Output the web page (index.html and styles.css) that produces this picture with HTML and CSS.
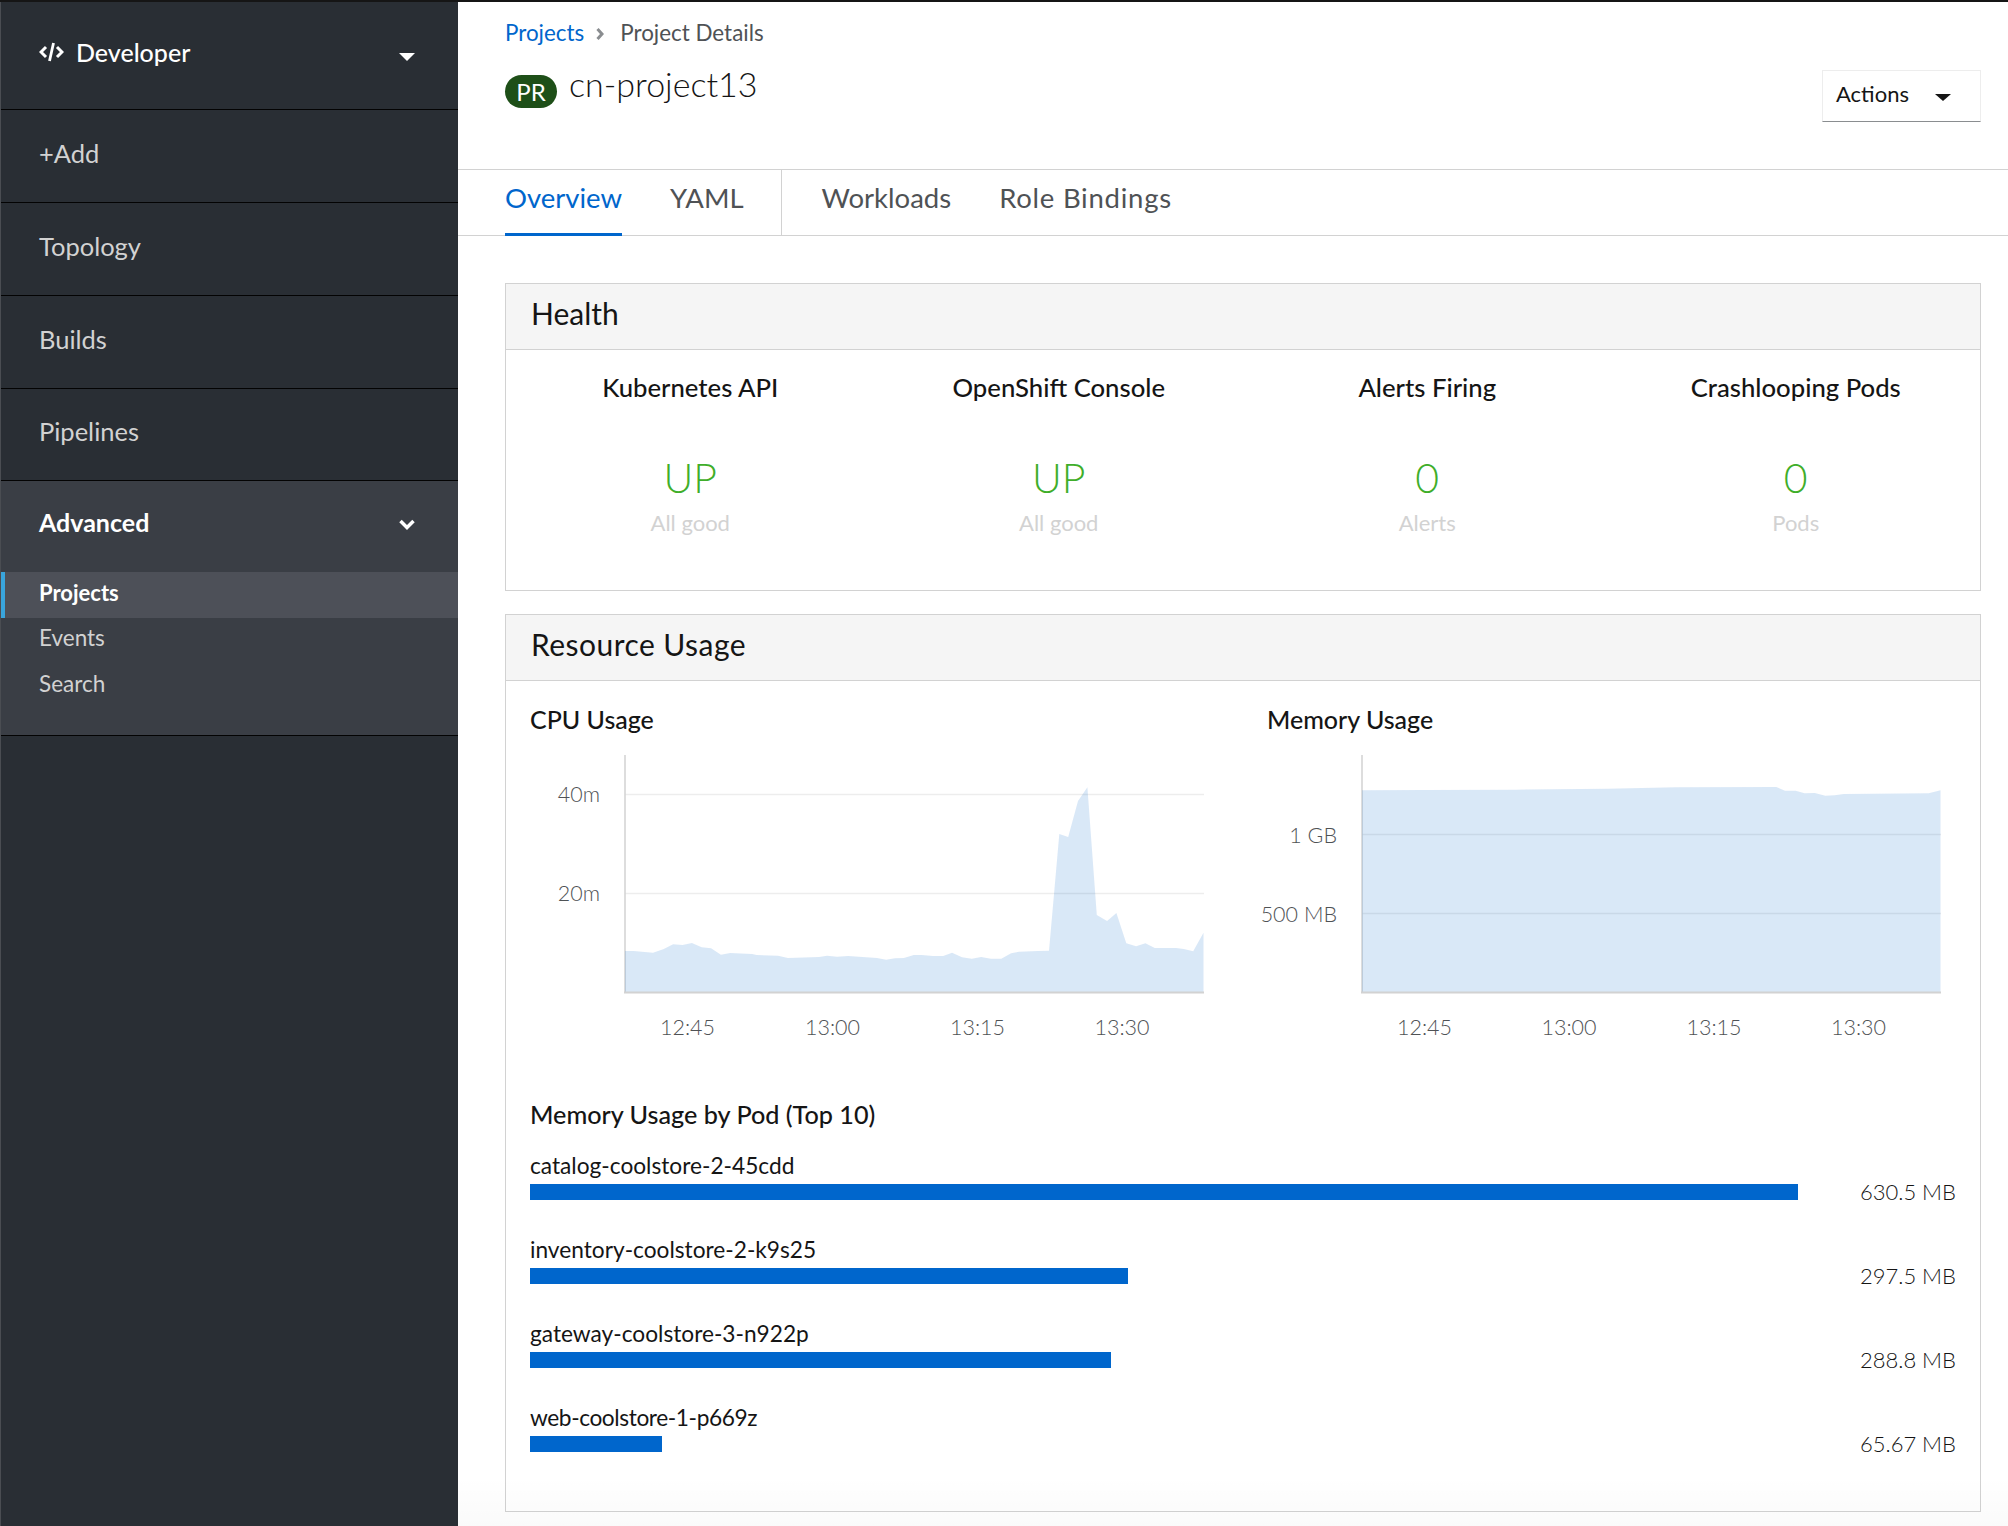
FILE: index.html
```html
<!DOCTYPE html>
<html lang="en">
<head>
    <meta charset="UTF-8">
    <title>Project Details</title>
    <link rel="stylesheet" href="styles.css">
</head>
<body>
    <div class="app">
        <!-- Sidebar -->
        <nav class="sidebar">
            <div class="perspective">
                <svg class="code-icon" viewBox="0 0 25 20" width="25" height="20">
                    <path d="M7 5 L2 10 L7 15 M18 5 L23 10 L18 15" fill="none" stroke="#fff" stroke-width="3"/>
                    <path d="M14.500 1 L10.500 19" fill="none" stroke="#fff" stroke-width="2.800"/>
                </svg>
                <span class="perspective-name">Developer</span>
                <span class="caret caret-white"></span>
            </div>
            <a class="nav-item" href="#">+Add</a>
            <a class="nav-item" href="#">Topology</a>
            <a class="nav-item" href="#">Builds</a>
            <a class="nav-item" href="#">Pipelines</a>
            <div class="nav-section">
                <div class="nav-section-title">
                    <span>Advanced</span>
                    <svg viewBox="0 0 16 12" width="16" height="12">
                        <path d="M1.500 2 L8 8.500 L14.500 2" fill="none" stroke="#fff" stroke-width="3.500"/>
                    </svg>
                </div>
                <a class="sub-item sub-item-active" href="#">Projects</a>
                <a class="sub-item" href="#">Events</a>
                <a class="sub-item" href="#">Search</a>
            </div>
        </nav>

        <!-- Main -->
        <main class="main">
            <div class="page-head">
                <div class="head-left">
                    <div class="breadcrumb">
                        <a href="#">Projects</a>
                        <svg viewBox="0 0 8 12" width="8" height="12">
                            <path d="M1.500 1 L6 6 L1.500 11" fill="none" stroke="#8a8d90" stroke-width="3"/>
                        </svg>
                        <span>Project Details</span>
                    </div>
                    <div class="title-row">
                        <span class="badge">PR</span>
                        <h1>cn-project13</h1>
                    </div>
                </div>
                <button class="actions">Actions <span class="caret caret-dark"></span></button>
            </div>

            <div class="tabs">
                <a class="tab tab-active" href="#">Overview</a>
                <a class="tab tab-last" href="#">YAML</a>
                <span class="tab-sep"></span>
                <a class="tab" href="#">Workloads</a>
                <a class="tab tab-wide" href="#">Role Bindings</a>
            </div>

            <div class="content">
                <!-- Health -->
                <section class="card card-health">
                    <h2 class="card-head">Health</h2>
                    <div class="health-grid">
                        <div class="health-item">
                            <h3>Kubernetes API</h3>
                            <div class="health-value">UP</div>
                            <div class="health-sub">All good</div>
                        </div>
                        <div class="health-item">
                            <h3>OpenShift Console</h3>
                            <div class="health-value">UP</div>
                            <div class="health-sub">All good</div>
                        </div>
                        <div class="health-item">
                            <h3>Alerts Firing</h3>
                            <div class="health-value">0</div>
                            <div class="health-sub">Alerts</div>
                        </div>
                        <div class="health-item">
                            <h3>Crashlooping Pods</h3>
                            <div class="health-value">0</div>
                            <div class="health-sub">Pods</div>
                        </div>
                    </div>
                </section>

                <!-- Resource Usage -->
                <section class="card card-usage">
                    <h2 class="card-head card-head-wide">Resource Usage</h2>
                    <div class="usage-body">
                        <div class="chart-grid">
                            <div class="chart">
                                <h3>CPU Usage</h3>
                                <svg class="chart-svg" viewBox="0 0 700 310" width="700" height="310">
                                    <path class="grid-line" d="M95 54.500 H674 M95 153.500 H674"/>
                                    <path class="axis-line" d="M95 15 V252"/>
                                    <polygon class="area" points="95,211 103.800,211 123,212.700 133.800,209 143.100,204.300 152.500,205 161.900,203 171.700,207.300 181.100,208.300 190.900,214.700 200.300,213 222.100,214 226.600,215 248,215.700 257.900,218 289.100,217 297.100,215.700 307,216.700 318.100,216 347.100,218 356.100,219.700 365,218.300 373.900,218 383.800,215 391.800,215 403,216 413.200,216 422.100,212.700 432,217.300 441.800,218.700 451.200,217 461,218.700 471.300,218.700 481.100,213.300 489.100,211.700 507.900,211 519,210.700 529.300,94 538.200,97 548,61 557.400,47.300 566.800,175 577.100,181 586.400,173 596.300,203.300 606.100,206.300 615.400,203.300 624.800,208 646.300,208 653.800,209 663.200,211.300 673.500,192.700 673.500,252 95,252"/>
                                    <path class="base-line" d="M94 252.500 H674"/>
                                    <text class="tick" x="70" y="62" text-anchor="end">40m</text>
                                    <text class="tick" x="70" y="161" text-anchor="end">20m</text>
                                    <text class="tick" x="157.500" y="295" text-anchor="middle">12:45</text>
                                    <text class="tick" x="302.500" y="295" text-anchor="middle">13:00</text>
                                    <text class="tick" x="447.500" y="295" text-anchor="middle">13:15</text>
                                    <text class="tick" x="592" y="295" text-anchor="middle">13:30</text>
                                </svg>
                            </div>
                            <div class="chart">
                                <h3>Memory Usage</h3>
                                <svg class="chart-svg" viewBox="0 0 700 310" width="700" height="310">
                                    <path class="grid-line" d="M95 94.500 H674 M95 173.500 H674"/>
                                    <path class="axis-line" d="M95 15 V252"/>
                                    <polygon class="area" points="95,50.300 156.700,50 248.500,49.700 340.300,48.700 409.200,47.300 509.300,47 518,50.700 528.600,50.700 537.700,53.300 547.800,53 558.400,55.700 567.600,55.300 576.800,54 661.700,53.300 673.500,50.300 673.500,252 95,252"/>
                                    <path class="base-line" d="M94 252.500 H674"/>
                                    <text class="tick" x="70" y="103" text-anchor="end">1 GB</text>
                                    <text class="tick" x="70" y="182" text-anchor="end">500 MB</text>
                                    <text class="tick" x="157.500" y="295" text-anchor="middle">12:45</text>
                                    <text class="tick" x="302" y="295" text-anchor="middle">13:00</text>
                                    <text class="tick" x="447" y="295" text-anchor="middle">13:15</text>
                                    <text class="tick" x="591.500" y="295" text-anchor="middle">13:30</text>
                                </svg>
                            </div>
                        </div>

                        <h3 class="pods-title">Memory Usage by Pod (Top 10)</h3>
                        <div class="pod-row">
                            <div class="pod-main">
                                <div class="pod-name">catalog-coolstore-2-45cdd</div>
                                <div class="pod-bar" style="width: 100%"></div>
                            </div>
                            <div class="pod-value">630.5 MB</div>
                        </div>
                        <div class="pod-row">
                            <div class="pod-main">
                                <div class="pod-name">inventory-coolstore-2-k9s25</div>
                                <div class="pod-bar" style="width: 47.2%"></div>
                            </div>
                            <div class="pod-value">297.5 MB</div>
                        </div>
                        <div class="pod-row">
                            <div class="pod-main">
                                <div class="pod-name">gateway-coolstore-3-n922p</div>
                                <div class="pod-bar" style="width: 45.8%"></div>
                            </div>
                            <div class="pod-value">288.8 MB</div>
                        </div>
                        <div class="pod-row">
                            <div class="pod-main">
                                <div class="pod-name pod-name-tight">web-coolstore-1-p669z</div>
                                <div class="pod-bar" style="width: 10.4%"></div>
                            </div>
                            <div class="pod-value">65.67 MB</div>
                        </div>
                    </div>
                </section>
            </div>
        </main>
    </div>
</body>
</html>
```

FILE: styles.css
```css
/* General */
* {
    box-sizing: border-box;
}

body {
    margin: 0;
    font-family: 'Lato', 'Noto Sans', sans-serif;
    color: #151515;
    background-color: #fff;
    overflow: hidden;
}

a {
    text-decoration: none;
}

h1, h2, h3 {
    margin: 0;
    font-weight: 400;
}

.app {
    display: flex;
    height: 100vh;
    border-top: 2px solid #151515;
}

/* Sidebar */
.sidebar {
    width: 458px;
    flex-shrink: 0;
    background-color: #292e34;
    border-left: 1px solid #4a4d52;
    display: flex;
    flex-direction: column;
}

.perspective {
    height: 108px;
    padding: 0 43px 7px 38px;
    display: flex;
    align-items: center;
    color: #fff;
    border-bottom: 1px solid #030303;
}

.code-icon {
    margin-right: 12px;
}

.perspective-name {
    flex: 1;
    font-size: 25px;
    font-weight: 500;
}

.caret {
    display: inline-block;
    width: 0;
    height: 0;
    border-left: 8px solid transparent;
    border-right: 8px solid transparent;
}

.caret-white {
    border-top: 8px solid #fff;
    margin-top: 10px;
}

.caret-dark {
    border-top: 7px solid #151515;
    margin-left: 26px;
    margin-top: 8px;
}

.nav-item {
    height: 93px;
    padding: 0 0 7px 38px;
    display: flex;
    align-items: center;
    font-size: 25.500px;
    color: #d2d2d2;
    border-bottom: 1px solid #030303;
}

.nav-item:last-of-type {
    height: 92px;
}

.nav-section {
    height: 255px;
    background-color: #3a3e45;
    border-bottom: 1px solid #030303;
}

.nav-section-title {
    height: 91px;
    padding: 0 43px 10px 38px;
    display: flex;
    align-items: center;
    justify-content: space-between;
    font-size: 25px;
    font-weight: 700;
    color: #fff;
}

.nav-section-title svg {
    margin-top: 6px;
}

.sub-item {
    height: 46px;
    padding: 0 0 8px 38px;
    display: flex;
    align-items: center;
    font-size: 22.500px;
    color: #d2d2d2;
}

.sub-item-active {
    padding: 0 0 5px 34px;
    background-color: #4d5058;
    border-left: 4px solid #39a5dc;
    color: #fff;
    font-weight: 700;
    font-size: 22px;
}

/* Main */
.main {
    flex: 1;
    min-width: 0;
    position: relative;
}

.main::after {
    content: "";
    position: absolute;
    left: 0;
    right: 0;
    bottom: 0;
    height: 50px;
    background: linear-gradient(rgba(0, 0, 0, 0), rgba(0, 0, 0, 0.02));
    pointer-events: none;
}

.page-head {
    height: 168px;
    padding: 16px 27px 0 47px;
    display: flex;
    justify-content: space-between;
    border-bottom: 1px solid #d2d2d2;
}

.breadcrumb {
    height: 28px;
    display: flex;
    align-items: center;
    font-size: 22.400px;
    color: #4f5255;
}

.breadcrumb a {
    color: #06c;
}

.breadcrumb svg {
    margin: 3px 16px 0 12px;
}

.title-row {
    display: flex;
    align-items: flex-start;
    gap: 12px;
    margin-top: 19px;
}

.badge {
    width: 52px;
    height: 33px;
    margin-top: 10px;
    border-radius: 17px;
    background-color: #1e4f18;
    color: #fff;
    font-size: 24px;
    display: flex;
    align-items: center;
    justify-content: center;
}

h1 {
    margin-top: -3px;
    font-size: 34px;
    line-height: 44px;
    font-weight: 300;
}

.actions {
    width: 159px;
    height: 52px;
    margin-top: 52px;
    padding: 0 0 5px 13px;
    display: flex;
    align-items: center;
    font-family: inherit;
    font-size: 22px;
    color: #151515;
    background-color: #fff;
    border: 1px solid #ededed;
    border-bottom-color: #8a8d90;
}

/* Tabs */
.tabs {
    height: 66px;
    padding-left: 47px;
    display: flex;
    border-bottom: 1px solid #d2d2d2;
}

.tab {
    height: 66px;
    margin-right: 48px;
    padding-bottom: 11px;
    display: flex;
    align-items: center;
    font-size: 27.500px;
    color: #4f5255;
}

.tab-active {
    color: #06c;
    border-bottom: 3px solid #06c;
    padding-bottom: 8px;
}

.tab-last {
    margin-right: 37px;
}

.tab-wide {
    letter-spacing: 0.75px;
}

.tab-sep {
    width: 1px;
    margin-right: 40px;
    background-color: #d2d2d2;
}

/* Cards */
.content {
    padding: 47px 27px 0 47px;
}

.card {
    border: 1px solid #d2d2d2;
    background-color: #fff;
}

.card-health {
    height: 308px;
    margin-bottom: 23px;
}

.card-usage {
    height: 898px;
}

.card-head {
    height: 66px;
    padding: 0 0 7px 25px;
    display: flex;
    align-items: center;
    font-size: 30px;
    background-color: #f5f5f5;
    border-bottom: 1px solid #d2d2d2;
}

.card-head-wide {
    letter-spacing: 0.45px;
}

/* Health */
.health-grid {
    display: grid;
    grid-template-columns: repeat(4, 1fr);
}

.health-item {
    padding-top: 22px;
    text-align: center;
}

.health-item h3 {
    font-size: 25.700px;
    line-height: 30px;
    font-weight: 500;
}

.health-value {
    margin-top: 51px;
    font-size: 41px;
    line-height: 50px;
    font-weight: 300;
    color: #3fae2a;
}

.health-sub {
    margin-top: 5px;
    font-size: 22px;
    line-height: 30px;
    color: #d2d2d2;
}

/* Resource usage */
.usage-body {
    padding: 0 24px;
}

.chart-grid {
    display: grid;
    grid-template-columns: 737px 1fr;
    padding-top: 23px;
}

.chart h3 {
    font-size: 25px;
    line-height: 30px;
    font-weight: 500;
}

.chart-svg {
    display: block;
    margin-top: 6px;
    overflow: visible;
}

.grid-line {
    fill: none;
    stroke: #ededed;
    stroke-width: 1.5;
}

.axis-line {
    fill: none;
    stroke: #d2d2d2;
    stroke-width: 1.5;
}

.base-line {
    fill: none;
    stroke: #d2d2d2;
    stroke-width: 2;
}

.area {
    fill: #06c;
    fill-opacity: 0.15;
}

.tick {
    font-size: 21.500px;
    font-weight: 300;
    fill: #4f5255;
}

.pods-title {
    margin-top: 49px;
    font-size: 25.200px;
    line-height: 30px;
    font-weight: 500;
}

.pod-row {
    height: 84px;
    display: flex;
    align-items: flex-start;
}

.pod-main {
    width: 1268px;
    padding-top: 22px;
}

.pod-name {
    font-size: 22.700px;
    line-height: 30px;
}

.pod-name-tight {
    letter-spacing: -0.4px;
}

.pod-bar {
    height: 16px;
    margin-top: 3px;
    background-color: #06c;
}

.pod-value {
    flex: 1;
    padding-top: 48px;
    font-size: 22px;
    line-height: 30px;
    font-weight: 300;
    color: #151515;
    text-align: right;
}
```
